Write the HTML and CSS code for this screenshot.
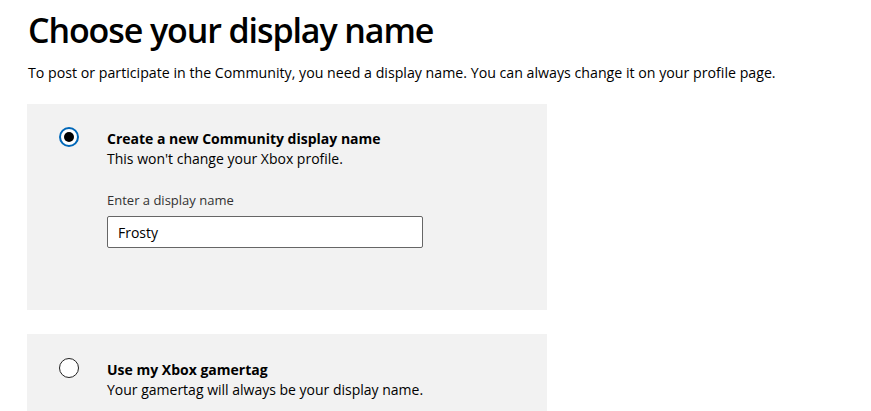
FILE: index.html
```html
<!DOCTYPE html>
<html lang="en">
<head>
<meta charset="utf-8">
<title>Choose your display name</title>
<link rel="stylesheet" href="styles.css">
</head>
<body>
<main class="page">
  <h1 class="title">Choose your display name</h1>
  <p class="intro">To post or participate in the Community, you need a display name. You can always change it on your profile page.</p>

  <section class="option">
    <span class="radio radio-on"><span class="dot"></span></span>
    <div class="option-body">
      <div class="option-title">Create a new Community display name</div>
      <div class="option-desc">This won't change your Xbox profile.</div>
      <label class="field-label" for="dn">Enter a display name</label>
      <input class="field" id="dn" type="text" value="Frosty">
    </div>
  </section>

  <section class="option option-second">
    <span class="radio"></span>
    <div class="option-body">
      <div class="option-title">Use my Xbox gamertag</div>
      <div class="option-desc">Your gamertag will always be your display name.</div>
    </div>
  </section>
</main>
</body>
</html>
```

FILE: styles.css
```css
html, body {
  margin: 0;
  padding: 0;
  background: #ffffff;
}
body {
  font-family: "Open Sans", "Noto Sans", "Liberation Sans", sans-serif;
  color: #000;
}
.page {
  padding: 8px 0 0 28px;
  width: 520px;
}
.title {
  margin: 0;
  font-size: 34px;
  font-weight: 600;
  line-height: 44px;
  letter-spacing: -1.1px;
}
.intro {
  margin: 11px 0 0 0;
  font-size: 14.2px;
  line-height: 19px;
  white-space: nowrap;
}
.option {
  margin-top: 22px;
  margin-left: -1px;
  background: #f2f2f2;
  display: flex;
  align-items: flex-start;
  padding: 23px 0 62px 32px;
  width: 488px;
}
.option-second {
  margin-top: 24px;
  padding-top: 24px;
  padding-bottom: 20px;
}
.radio {
  box-sizing: border-box;
  width: 20px;
  height: 20px;
  border-radius: 50%;
  border: 1.5px solid #222;
  background: #fff;
  display: flex;
  align-items: center;
  justify-content: center;
  flex: none;
}
.radio-on {
  border: 2px solid #0067b8;
}
.dot {
  width: 10px;
  height: 10px;
  border-radius: 50%;
  background: #000;
}
.option-body {
  margin-left: 28px;
  display: flex;
  flex-direction: column;
}
.option-title {
  font-size: 14px;
  font-weight: 700;
  line-height: 20px;
  margin-top: 2px;
}
.option-desc {
  font-size: 14px;
  line-height: 20px;
}
.field-label {
  margin-top: 23px;
  font-size: 13px;
  line-height: 16px;
  color: #333;
}
.field {
  margin-top: 8px;
  box-sizing: border-box;
  width: 316px;
  height: 32px;
  border: 1px solid #666;
  border-radius: 2px;
  background: #fff;
  padding: 0 10px;
  font-family: inherit;
  font-size: 14px;
  color: #000;
  outline: none;
}
```
